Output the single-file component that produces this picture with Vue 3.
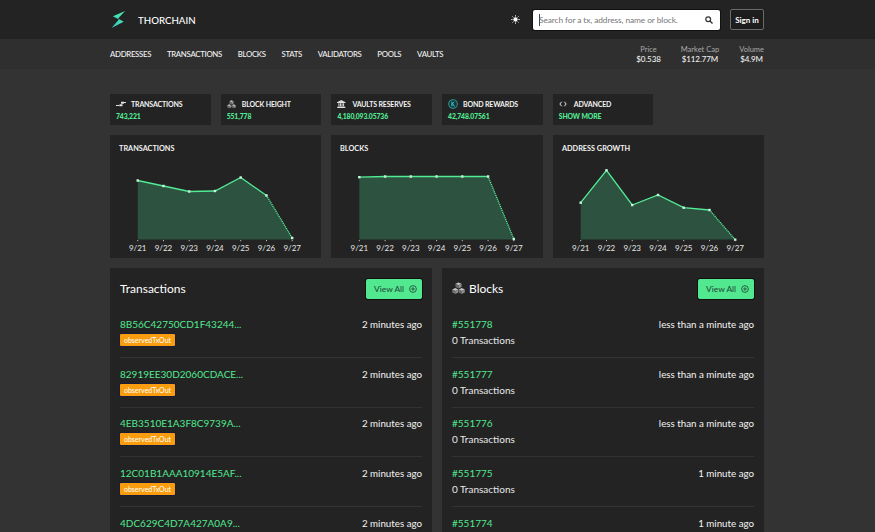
<script setup>
const nav = ['ADDRESSES', 'TRANSACTIONS', 'BLOCKS', 'STATS', 'VALIDATORS', 'POOLS', 'VAULTS']
const market = [
  { label: 'Price', value: '$0.538' },
  { label: 'Market Cap', value: '$112.77M' },
  { label: 'Volume', value: '$4.9M' }
]
const stats = [
  { id: 'tx', title: 'TRANSACTIONS', value: '743,221' },
  { id: 'block', title: 'BLOCK HEIGHT', value: '551,778' },
  { id: 'vault', title: 'VAULTS RESERVES', value: '4,180,093.05736' },
  { id: 'bond', title: 'BOND REWARDS', value: '42,748.07561' },
  { id: 'adv', title: 'ADVANCED', value: 'SHOW MORE' }
]
const days = ['9/21', '9/22', '9/23', '9/24', '9/25', '9/26', '9/27']
const baseX = [27.7, 53.5, 79.2, 105, 130.7, 156.5, 182.2]
const baseY = 104.5
const charts = [
  { title: 'TRANSACTIONS', dx: 0, ys: [45.5, 51, 56.5, 56, 42.5, 60.5, 103] },
  { title: 'BLOCKS', dx: 0.6, ys: [42.2, 41.5, 41.5, 41.5, 41.5, 41.5, 104] },
  { title: 'ADDRESS GROWTH', dx: 0, ys: [67.7, 35.3, 70, 60, 72.7, 75, 104.7] }
].map((c) => {
  const xs = baseX.map((x) => x + c.dx)
  const pts = c.ys.map((y, i) => ({ x: xs[i], y }))
  return {
    title: c.title,
    xs,
    pts,
    line: pts.slice(0, 6).map((p) => `${p.x},${p.y}`).join(' '),
    area: `${xs[0]},${baseY} ` + pts.map((p) => `${p.x},${p.y}`).join(' ') + ` ${xs[6]},${baseY}`
  }
})
const txs = [
  '8B56C42750CD1F43244...',
  '82919EE30D2060CDACE...',
  '4EB3510E1A3F8C9739A...',
  '12C01B1AAA10914E5AF...',
  '4DC629C4D7A427A0A9...'
]
const blocks = [
  { id: '#551778', time: 'less than a minute ago' },
  { id: '#551777', time: 'less than a minute ago' },
  { id: '#551776', time: 'less than a minute ago' },
  { id: '#551775', time: '1 minute ago' },
  { id: '#551774', time: '1 minute ago' }
]
const cubeFaces = [[6, 0.4], [3, 5.6], [9, 5.6]].flatMap(([cx, y]) => {
  const w = 2.8
  const h = 1.3
  const v = 2.9
  return [
    { d: `M${cx} ${y}L${cx + w} ${y + h}L${cx} ${y + 2 * h}L${cx - w} ${y + h}Z`, fill: '#c4c4c4' },
    { d: `M${cx - w} ${y + h}L${cx} ${y + 2 * h}V${y + 2 * h + v}L${cx - w} ${y + h + v}Z`, fill: '#6e6e6e' },
    { d: `M${cx + w} ${y + h}L${cx} ${y + 2 * h}V${y + 2 * h + v}L${cx + w} ${y + h + v}Z`, fill: '#8e8e8e' }
  ]
})
</script>

<template>
  <div class="page">
    <header class="top">
      <div class="wrap top-in">
        <div class="brand">
          <svg class="logo" width="15" height="17" viewBox="0 0 16 18">
            <defs>
              <linearGradient id="bolt" x1="0" y1="1" x2="1" y2="0">
                <stop offset="0" stop-color="#33c8c8" />
                <stop offset="1" stop-color="#4ef0a8" />
              </linearGradient>
            </defs>
            <path d="M15 0 L2 5.5 L8.5 9 L0.5 18 L13.5 11.5 L7.5 8 Z" fill="url(#bolt)" />
          </svg>
          <span class="brand-name">THORCHAIN</span>
        </div>
        <div class="top-right">
          <svg class="sun" width="9" height="9" viewBox="0 0 11 11">
            <circle cx="5.5" cy="5.5" r="2.6" fill="#fff" />
            <path d="M5.5 0.3v1.6M5.5 9.1v1.6M0.3 5.5h1.6M9.1 5.5h1.6M1.8 1.8l1.1 1.1M8.1 8.1l1.1 1.1M1.8 9.2l1.1-1.1M8.1 2.9l1.1-1.1" stroke="#fff" stroke-width="1.1" />
          </svg>
          <div class="search">
            <span class="caret"></span>
            <span class="placeholder">Search for a tx, address, name or block.</span>
            <svg width="8" height="8" viewBox="0 0 10 10" class="mag">
              <circle cx="4" cy="4" r="3" fill="none" stroke="#333" stroke-width="1.5" />
              <path d="M6.2 6.2 L9.4 9.4" stroke="#333" stroke-width="1.7" />
            </svg>
          </div>
          <button class="signin">Sign in</button>
        </div>
      </div>
    </header>

    <div class="sub">
      <div class="wrap sub-in">
        <nav class="nav">
          <a v-for="n in nav" :key="n">{{ n }}</a>
        </nav>
        <div class="market">
          <div v-for="m in market" :key="m.label" class="m">
            <div class="m-label">{{ m.label }}</div>
            <div class="m-value">{{ m.value }}</div>
          </div>
        </div>
      </div>
    </div>

    <main class="wrap main">
      <section class="stats">
        <div v-for="s in stats" :key="s.id" class="stat">
          <div class="stat-head">
            <span class="stat-icon">
              <svg v-if="s.id === 'tx'" width="10" height="6" viewBox="0 0 10 6">
                <path d="M0 4.5h3.5M6.5 1.5H10" stroke="#e0e0e0" stroke-width="1" fill="none" />
                <path d="M3.5 3.2h3v2h-3zM5 0.8h3v2H5z" fill="#e0e0e0" />
              </svg>
              <svg v-else-if="s.id === 'block'" width="9" height="9" viewBox="0 0 12 12">
                <path v-for="(f, i) in cubeFaces" :key="i" :d="f.d" :fill="f.fill" />
              </svg>
              <svg v-else-if="s.id === 'vault'" width="8.5" height="8" viewBox="0 0 12 11">
                <path d="M6 0 L12 3 V4 H0 V3Z M1 9h10v1H1z M0 10h12v1H0z" fill="#ddd" />
                <path d="M2 4.6h1.4v4H2zM4.2 4.6h1.4v4H4.2zM6.4 4.6h1.4v4H6.4zM8.6 4.6H10v4H8.6z" fill="#ddd" />
              </svg>
              <svg v-else-if="s.id === 'bond'" width="10" height="10" viewBox="0 0 12 12">
                <circle cx="6" cy="6" r="5.2" fill="#12343a" stroke="#2a8f8f" stroke-width="1.3" />
                <path d="M4.7 3v6M4.7 6.4 L7.6 3.4M5.6 5.6 L7.8 9" stroke="#4fd0c8" stroke-width="1.1" fill="none" />
              </svg>
              <svg v-else class="adv" width="8" height="6" viewBox="0 0 10 8">
                <path d="M3.2 1 L0.8 4 L3.2 7M6.8 1 L9.2 4 L6.8 7" stroke="#eee" stroke-width="1.3" fill="none" />
              </svg>
            </span>
            <span class="stat-title">{{ s.title }}</span>
          </div>
          <div class="stat-value">{{ s.value }}</div>
        </div>
      </section>

      <section class="charts">
        <div v-for="c in charts" :key="c.title" class="chart">
          <div class="chart-title">{{ c.title }}</div>
          <svg class="plot" width="212" height="123" viewBox="0 0 212 123">
            <polygon :points="c.area" fill="#2d5240" />
            <polyline :points="c.line" fill="none" stroke="#52ec95" stroke-width="1.3" />
            <line :x1="c.pts[5].x" :y1="c.pts[5].y" :x2="c.pts[6].x" :y2="c.pts[6].y" stroke="#52ec95" stroke-width="1.3" stroke-dasharray="1.2 0.8" />
            <rect v-for="(p, i) in c.pts" :key="i" :x="p.x - 1.2" :y="p.y - 1.2" width="2.4" height="2.4" fill="#c5f8dc" />
            <rect v-for="x in c.xs" :key="'t' + x" :x="x - 0.5" y="105" width="1" height="1.2" fill="#bbb" />
            <text v-for="(d, i) in days" :key="d" :x="c.xs[i]" y="116" text-anchor="middle" class="tick">{{ d }}</text>
          </svg>
        </div>
      </section>

      <section class="panels">
        <div class="panel">
          <div class="panel-head">
            <h2>Transactions</h2>
            <a class="view">View All
              <svg width="8" height="8" viewBox="0 0 10 10"><circle cx="5" cy="5" r="4.2" fill="none" stroke="#24503a" stroke-width="1.1" /><path d="M2.8 5h4.4M5 2.8v4.4" fill="none" stroke="#24503a" stroke-width="1.1" /></svg>
            </a>
          </div>
          <div v-for="(t, i) in txs" :key="t" class="row">
            <div class="row-main">
              <a class="link">{{ t }}</a>
              <span class="time">2 minutes ago</span>
            </div>
            <span v-if="i < 4" class="tag">observedTxOut</span>
          </div>
        </div>
        <div class="panel">
          <div class="panel-head">
            <h2 class="with-icon">
              <svg width="13" height="13" viewBox="0 0 12 12">
                <path v-for="(f, i) in cubeFaces" :key="i" :d="f.d" :fill="f.fill" />
              </svg>
              Blocks
            </h2>
            <a class="view">View All
              <svg width="8" height="8" viewBox="0 0 10 10"><circle cx="5" cy="5" r="4.2" fill="none" stroke="#24503a" stroke-width="1.1" /><path d="M2.8 5h4.4M5 2.8v4.4" fill="none" stroke="#24503a" stroke-width="1.1" /></svg>
            </a>
          </div>
          <div v-for="(b, i) in blocks" :key="b.id" class="row">
            <div class="row-main">
              <a class="link">{{ b.id }}</a>
              <span class="time">{{ b.time }}</span>
            </div>
            <span v-if="i < 4" class="count">0 Transactions</span>
          </div>
        </div>
      </section>
    </main>
  </div>
</template>

<style>
html, body { margin: 0; background: #333; overflow: hidden; }
</style>

<style scoped>
.page { height: 532px; overflow: hidden; background: #333; font-family: Lato, "Open Sans", sans-serif; color: #fff; }
.wrap { width: 654px; margin: 0 0 0 110px; }
.top { height: 39px; background: #232323; }
.top-in { height: 39px; display: flex; align-items: center; justify-content: space-between; }
.brand { display: flex; align-items: center; gap: 12px; }
.logo { margin-left: 1px; }
.brand-name { font-size: 9.7px; color: #fff; font-weight: 500; }
.top-right { display: flex; align-items: center; }
.sun { margin: 0 13px 0 1px; }
.search { width: 187px; height: 20px; background: #fff; border-radius: 2px; display: flex; align-items: center; padding: 0 6px; box-sizing: border-box; margin-right: 10px; box-shadow: 0 0 0 1px #111; }
.caret { width: 1px; height: 12px; background: #444; margin-right: -1px; }
.placeholder { flex: 1; font-size: 8.4px; letter-spacing: -0.1px; color: #777; white-space: nowrap; }
.mag { margin-right: 1px; }
.signin { width: 34px; height: 21px; padding: 0; background: #1d1d1d; border: 1px solid #6a6a6a; border-radius: 2px; color: #fff; font: 700 8px Lato, sans-serif; }
.sub { height: 30px; background: #2f2f2f; }
.sub-in { height: 30px; display: flex; align-items: center; justify-content: space-between; }
.nav { display: flex; gap: 15.8px; }
.nav a { font-size: 7.8px; letter-spacing: -0.3px; font-weight: 500; color: #f2f2f2; white-space: nowrap; }
.market { display: flex; gap: 20px; padding-top: 1px; }
.m { text-align: center; line-height: 9.5px; }
.m-label { font-size: 7.5px; color: #aaa; }
.m-value { font-size: 8px; letter-spacing: -0.1px; color: #eee; font-weight: 500; }
.main { padding-top: 25px; }
.stats { display: grid; grid-template-columns: repeat(5, 100.7px); gap: 10px; }
.stat { height: 31px; background: #232323; padding: 4px 0 0 6px; box-sizing: border-box; }
.stat-head { display: flex; align-items: center; height: 12px; }
.stat-icon { width: 15px; display: flex; align-items: center; }
.stat-title { font-size: 7px; letter-spacing: -0.15px; font-weight: 700; color: #f2f2f2; white-space: nowrap; }
.stat-value { font-size: 6.8px; letter-spacing: -0.1px; font-weight: 900; color: #52ec95; margin-top: 1px; line-height: 10px; white-space: nowrap; }
.charts { display: grid; grid-template-columns: 211px 212px 211px; gap: 10px; margin-top: 10px; }
.chart { height: 123px; background: #232323; position: relative; }
.chart-title { position: absolute; left: 9px; top: 8.5px; font-size: 7.3px; font-weight: 700; color: #f2f2f2; white-space: nowrap; }
.plot { display: block; }
.tick { font-size: 8px; fill: #e5e5e5; font-family: Lato, sans-serif; }
.panels { display: grid; grid-template-columns: 322px 322px; gap: 10px; margin-top: 10px; }
.panel { background: #232323; padding: 9px 10px 0; box-sizing: border-box; height: 300px; }
.panel-head { display: flex; justify-content: space-between; align-items: center; height: 22px; margin: 1px 0 16px; }
h2 { margin: 0 0 2px; font-size: 12px; font-weight: 400; color: #fff; }
.with-icon { display: flex; align-items: center; gap: 4px; }
.view { width: 56px; height: 20px; background: #52e890; border-radius: 2px; box-shadow: 0 0 0 1px #111; color: #24503a; font-size: 8.4px; font-weight: 500; display: flex; align-items: center; padding-left: 8px; box-sizing: border-box; gap: 5px; }
.row { height: 42px; border-bottom: 1px solid #333; box-sizing: border-box; margin-bottom: 7.7px; }
.row-main { display: flex; justify-content: space-between; align-items: center; height: 16px; }
.link { font-size: 10px; color: #52e890; }
.time { font-size: 9.75px; color: #f4f4f4; }
.tag { display: block; margin-top: 2px; height: 12px; width: 55px; line-height: 12px; text-align: center; background: #f99d0e; color: #fff; font-size: 7px; border-radius: 1px; box-shadow: 0 0 0 1px #1b1b3a; }
.count { display: block; margin-top: 1px; font-size: 10px; color: #e8e8e8; line-height: 14px; }
</style>
